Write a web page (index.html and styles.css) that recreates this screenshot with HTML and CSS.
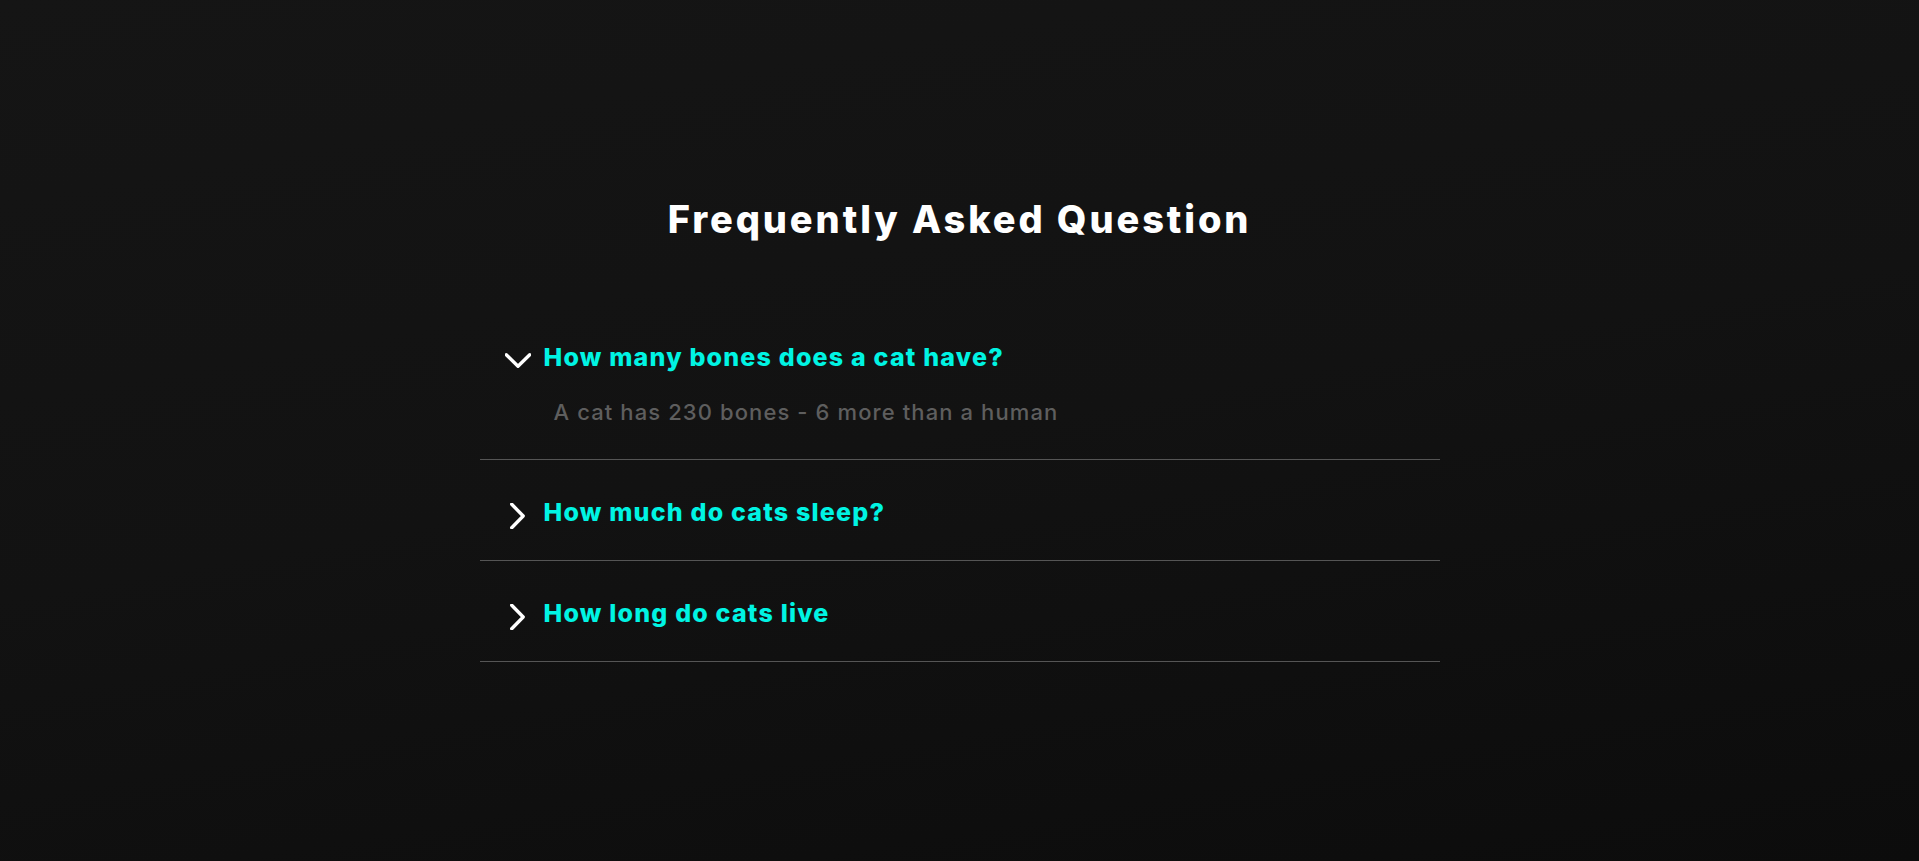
FILE: index.html
```html
<!DOCTYPE html>
<html lang="en">
<head>
<meta charset="utf-8">
<title>FAQ</title>
<link rel="stylesheet" href="styles.css">
</head>
<body>
<main class="faq">
  <h1 class="faq-title">Frequently Asked Question</h1>
  <ul class="faq-list">
    <li class="faq-item open">
      <div class="faq-question">
        <svg class="chevron" viewBox="0 0 24 24" aria-hidden="true"><path d="M1.2 6.2 L12 16.8 L22.8 6.2"/></svg>
        <span class="q-text">How many bones does a cat have?</span>
      </div>
      <p class="faq-answer">A cat has 230 bones - 6 more than a human</p>
    </li>
    <li class="faq-item">
      <div class="faq-question">
        <svg class="chevron right" viewBox="0 0 24 24" aria-hidden="true"><path d="M1.2 6.2 L12 16.8 L22.8 6.2"/></svg>
        <span class="q-text">How much do cats sleep?</span>
      </div>
    </li>
    <li class="faq-item">
      <div class="faq-question">
        <svg class="chevron right" viewBox="0 0 24 24" aria-hidden="true"><path d="M1.2 6.2 L12 16.8 L22.8 6.2"/></svg>
        <span class="q-text">How long do cats live</span>
      </div>
    </li>
  </ul>
</main>
</body>
</html>
```

FILE: styles.css
```css
* { box-sizing: border-box; }

html, body {
  margin: 0;
  height: 100%;
}

body {
  min-height: 100vh;
  background: linear-gradient(170deg, #151515 0%, #121212 50%, #0c0c0c 100%);
  font-family: Inter, "Noto Sans", "Liberation Sans", sans-serif;
  color: #ffffff;
}

.faq {
  width: 960px;
  margin: 0 auto;
  padding-top: 195px;
}

.faq-title {
  margin: 0;
  font-size: 38px;
  line-height: 48px;
  font-weight: 800;
  text-align: center;
  letter-spacing: 2.9px;
  color: #ffffff;
}

.faq-list {
  list-style: none;
  margin: 62px 0 0;
  padding: 0;
}

.faq-item {
  padding: 36px 0 32px;
  border-bottom: 1px solid #555555;
}

.faq-question {
  display: flex;
  align-items: center;
  padding-left: 25px;
  height: 32px;
}

.chevron {
  width: 26px;
  height: 26px;
  margin-top: 8px;
  margin-right: 13px;
  flex: none;
  fill: none;
  stroke: #ffffff;
  stroke-width: 3.1;
  stroke-linecap: round;
  stroke-linejoin: round;
}

.chevron.right {
  transform: rotate(-90deg);
}

.q-text {
  font-size: 25px;
  line-height: 32px;
  font-weight: 800;
  color: #00f4e3;
  letter-spacing: 1.2px;
}

.faq-answer {
  margin: 24px 0 0 74px;
  font-size: 22px;
  line-height: 30px;
  font-weight: 500;
  color: #5e5e5e;
  letter-spacing: 1.1px;
}
```
